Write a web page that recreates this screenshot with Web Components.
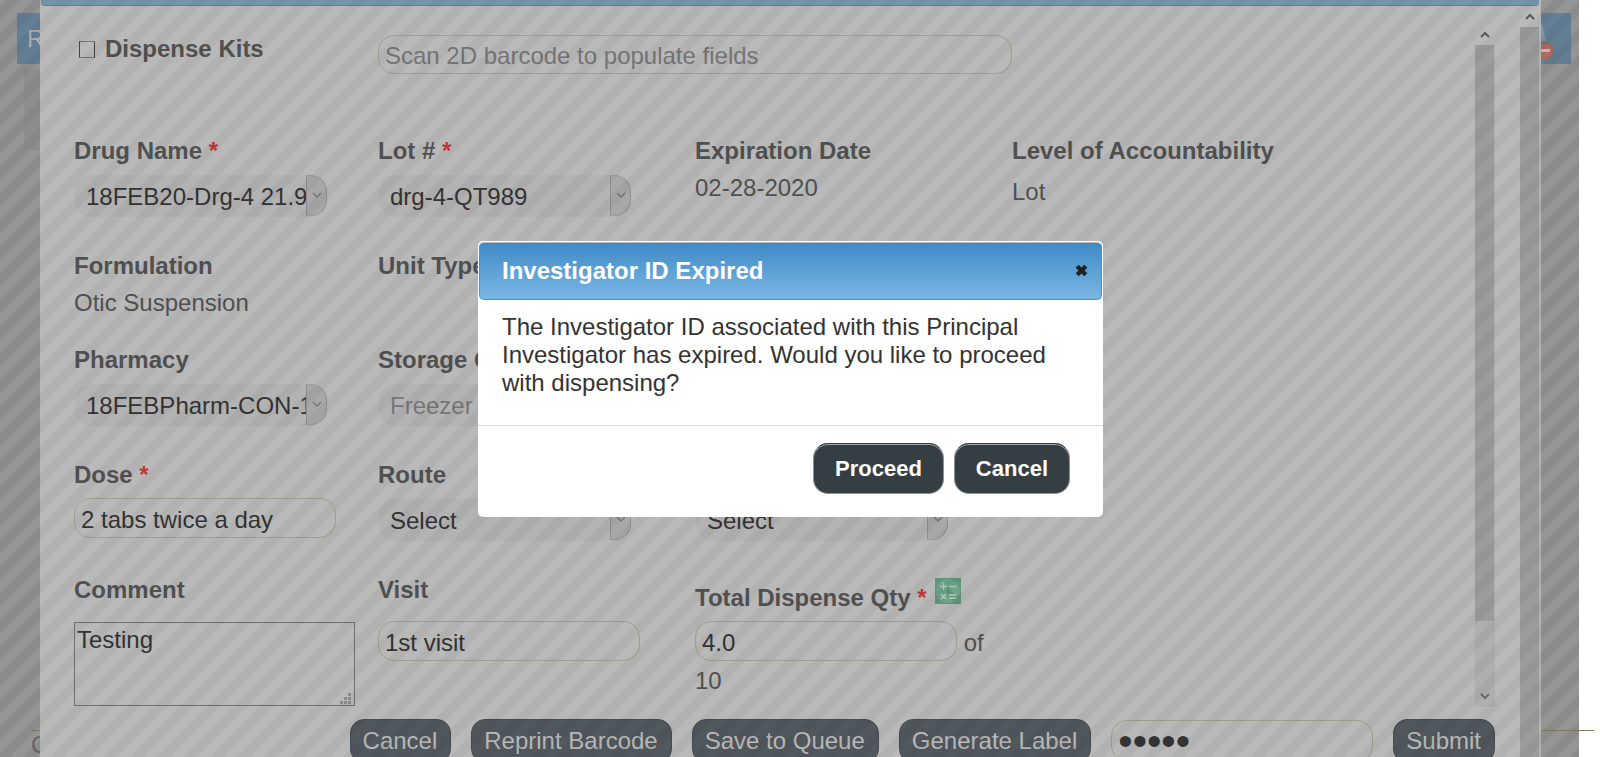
<!DOCTYPE html>
<html lang="en">
<head>
<meta charset="utf-8">
<meta name="viewport" content="width=device-width, initial-scale=1">
<title>Dispense</title>
<style>
  html, body { height: 100%; margin: 0; }
  body { background: #fff; overflow: hidden; font: 24px/28px "Liberation Sans", Arial, sans-serif; color: #515151; }
</style>
</head>
<body>
<app-shell>
  <host-page slot="page"></host-page>
  <dispense-window slot="window">
    <scan-bar slot="body"></scan-bar>
    <field-grid slot="body">
      <form-field label="Drug Name" required kind="select" value="18FEB20-Drg-4 21.9"></form-field>
      <form-field label="Lot #" required kind="select" value="drg-4-QT989"></form-field>
      <form-field label="Expiration Date" kind="text" value="02-28-2020"></form-field>
      <form-field label="Level of Accountability" kind="text" value="Lot" class="loose"></form-field>

      <form-field label="Formulation" kind="text" value="Otic Suspension"></form-field>
      <form-field label="Unit Type" kind="text" value="" class="wide"></form-field>

      <form-field label="Pharmacy" kind="select" value="18FEBPharm-CON-1"></form-field>
      <form-field label="Storage C" kind="select" value="Freezer" disabled class="wide"></form-field>

      <form-field label="Dose" required kind="input" value="2 tabs twice a day"></form-field>
      <form-field label="Route" kind="select" value="Select"></form-field>
      <form-field label="" hint="Frequency" kind="select" value="Select" class="rest"></form-field>

      <form-field label="Comment" kind="textarea" value="Testing"></form-field>
      <form-field label="Visit" kind="input" value="1st visit" class="low"></form-field>
      <form-field label="Total Dispense Qty" required kind="input" value="4.0" class="total"><calc-icon slot="icon"></calc-icon><span slot="after">of 10</span></form-field>
    </field-grid>
    <action-bar slot="footer">
      <pill-button>Cancel</pill-button>
      <pill-button>Reprint Barcode</pill-button>
      <pill-button>Save to Queue</pill-button>
      <pill-button>Generate Label</pill-button>
      <pin-input></pin-input>
      <pill-button>Submit</pill-button>
    </action-bar>
  </dispense-window>
  <confirm-dialog slot="dialog" heading="Investigator ID Expired">
    The Investigator ID associated with this Principal Investigator has expired. Would you like to proceed with dispensing?
    <dialog-button slot="actions">Proceed</dialog-button>
    <dialog-button slot="actions">Cancel</dialog-button>
  </confirm-dialog>
</app-shell>

<script>
const define = (name, render) => customElements.define(name, class extends HTMLElement {
  constructor() { super(); this.attachShadow({ mode: "open" }); }
  connectedCallback() {
    this.shadowRoot.innerHTML = "<style>*{box-sizing:border-box}</style>" + render(this);
  }
});

/* Diagonal stripes, three to every 80px tile */
const stripes = alpha => `repeating-linear-gradient(135deg,
  rgba(0,0,0,${alpha}) 0, rgba(0,0,0,${alpha}) calc(100% / 12 - 2px),
  transparent calc(100% / 12), transparent calc(100% / 6 - 2px), rgba(0,0,0,${alpha}) calc(100% / 6))`;

define("app-shell", () => `
<style>
  :host { display: block; position: relative; height: 100%; overflow: hidden; }
  .window { position: absolute; inset: 0 59px 0 40px; }
  .veil { position: absolute; inset: 0 21px 0 0; pointer-events: none;
    background: ${stripes(.045)} 8px 0 / 80px 80px; }
  .center { position: absolute; inset: 0 19px 0 0; display: grid; place-items: center; }
</style>
<slot name="page"></slot>
<div class="window"><slot name="window"></slot></div>
<div class="veil"></div>
<div class="center"><slot name="dialog"></slot></div>`);

define("host-page", () => `
<style>
  :host { display: flex; flex-direction: column; height: 100%; position: relative; }
  .veil { position: absolute; inset: 0 21px 0 0; z-index: -1;
    background: ${stripes(.025)} 8px 0 / 80px 80px, #959595; }
  header { display: flex; align-items: center; justify-content: space-between; height: 51px; margin: 13px 29px 0 17px; padding: 0 0 0 10px;
    background: #637f95; color: #b0b0b0; font-size: 24px; }
  svg { display: block; }
  main { width: 60px; height: 81px; margin: 5px 0 0 24px; background: #8d8d8d; }
  footer { margin: auto 6px 0 31px; height: 27px; border-top: 1px solid #7f7b5c; color: #666; }
</style>
<div class="veil"></div>
<header><span>R</span>
<svg width="40" height="51" viewBox="0 0 40 51" aria-hidden="true"><path d="M2 10h9l4 18H2z" fill="#7d96a5"/><circle cx="14" cy="38" r="9" fill="#9c6761"/><circle cx="14" cy="38" r="7" fill="#ad6b62"/><path d="M8 36h11v3H8z" fill="#c2b6b2"/></svg></header>
<main></main>
<footer>C</footer>`);

define("scroll-rail", el => `
<style>
  :host { display: flex; flex-direction: column; background: #afafaf; }
  .btn { flex: none; height: 21px; display: grid; place-items: center; background: #bababa; }
  .btn.down { background: none; }
  .thumb { background: #9c9c9c; margin-right: 1px; flex: ${el.getAttribute("thumb")}; }
  .free { flex: ${el.getAttribute("free")}; }
</style>
<div class="btn"><svg width="10" height="8" viewBox="0 0 10 8"><path d="M1 6l4-4 4 4" fill="none" stroke="#585858" stroke-width="2"/></svg></div>
<div class="thumb"></div><div class="free"></div>
${el.hasAttribute("down") ? `<div class="btn down"><svg width="10" height="8" viewBox="0 0 10 8"><path d="M1 1l4 4 4-4" fill="none" stroke="#6a6a6a" stroke-width="2"/></svg></div>` : ""}`);

define("dispense-window", () => `
<style>
  :host { display: flex; flex-direction: column; height: 100%; background: #b9b9b9; }
  .bar { flex: none; height: 6px; margin: 0 2px 0 1px; background: #7496ad; border-bottom: 1px solid #5d7f99; border-radius: 0 0 4px 4px; }
  .row { flex: 1; min-height: 0; display: flex; }
  .main { flex: 1; min-width: 0; padding: 18px 25px 0 34px; display: flex; flex-direction: column; }
  .body { flex: none; height: 683px; display: flex; }
  .content { flex: 1; min-width: 0; }
  scroll-rail { flex: none; width: 20px; }
  .outer { margin-right: 1px; }
</style>
<div class="bar"></div>
<div class="row">
  <div class="main">
    <div class="body"><div class="content"><slot name="body"></slot></div><scroll-rail thumb="576" free="65" down></scroll-rail></div>
    <slot name="footer"></slot>
  </div>
  <scroll-rail class="outer" thumb="1" free="0"></scroll-rail>
</div>`);

const columns = "304fr 317fr 317fr 463fr";
const fieldCss = "font: inherit; color: #333; background: none; border: 1px solid #a0a08a; border-radius: 16px; height: 40px; padding: 3px 6px 0; margin: 0; outline: 0;";

define("scan-bar", () => `
<style>
  :host { display: grid; grid-template-columns: ${columns}; height: 113px; align-items: start; }
  label { display: flex; align-items: center; gap: 10px; margin: 11px 0 0 5px; font-weight: bold; }
  input[type=checkbox] { appearance: none; width: 16px; height: 17px; margin: 0; border: 1px solid #444; border-top-color: #777; border-bottom-color: #777; }
  input[type=text] { ${fieldCss} height: 39px; padding-top: 2px; grid-column: 2 / 4; margin-top: 11px; }
  input::placeholder { color: #757575; opacity: 1; }
</style>
<label><input type="checkbox">Dispense Kits</label>
<input type="text" placeholder="Scan 2D barcode to populate fields" aria-label="Barcode">`);

define("field-grid", () => `
<style>
  :host { display: grid; grid-template-columns: ${columns}; grid-template-rows: 115px 94px 115px 115px auto; align-items: start; }
  ::slotted(.wide) { grid-column: span 3; }
  ::slotted(.rest) { grid-column: span 2; }
</style><slot></slot>`);

define("form-field", el => {
  const kind = el.getAttribute("kind"), value = el.getAttribute("value");
  const hint = el.getAttribute("hint");
  const aria = hint ? ` aria-label="${hint}"` : "";
  const control = {
    text: `<div class="value">${value}</div>`,
    input: `<input id="c" type="text" value="${value}">`,
    textarea: `<div class="area"><textarea id="c">${value}</textarea><svg width="12" height="12" viewBox="0 0 12 12" aria-hidden="true"><path d="M0 9h3v3H0zM4 9h3v3H4zM8 9h3v3H8zM4 5h3v3H4zM8 5h3v3H8zM8 1h3v3H8z" fill="#8c8c8c"/></svg></div>`,
    select: `<div class="select"><select id="c"${aria}${el.hasAttribute("disabled") ? " disabled" : ""}><option>${value}</option></select><span class="arrow"><svg width="10" height="8" viewBox="0 0 10 8"><path d="M1 1l4 4 4-4" fill="none" stroke="#777" stroke-width="1.5"/></svg></span></div>`
  }[kind];
  return `
<style>
  :host { display: block; }
  .head { display: flex; min-height: 28px; margin-bottom: 9px; }
  label { font-weight: bold; white-space: nowrap; }
  i { color: #c23636; font-style: normal; }
  input { ${fieldCss} width: 262px; }
  .value { min-height: 28px; }
  :host(.loose) .value { padding-top: 4px; }
  .select { display: flex; width: 252px; height: 42px; margin: 10px 0 0 1px; border-radius: 16px; background: #b3b3b3; overflow: hidden; }
  select { appearance: none; flex: 1; min-width: 0; border: 0; margin: 0; padding: 1px 0 0 11px; background: none; font: inherit; color: #333; outline: 0; }
  select:disabled { color: #777; opacity: 1; }
  .arrow { width: 21px; height: 41px; display: grid; place-items: center; background: #a8a8a8; border: 1px solid #8f8f8f; border-top-color: #9c9c9c; border-bottom-color: #9c9c9c; border-radius: 0 16px 16px 0; }
  .area { display: grid; width: 281px; height: 84px; margin-top: 18px; }
  textarea { grid-area: 1 / 1; resize: none; margin: 0; border: 1px solid #707070; padding: 3px 2px; background: none; font: inherit; color: #333; outline: 0; }
  .area svg { grid-area: 1 / 1; place-self: end; margin: 0 3px 2px 0; }
  :host(.low) .head { margin-bottom: 17px; }
  :host(.total) .head { padding-top: 8px; }
  :host(.total) { padding-right: 20px; }
  ::slotted([slot=icon]) { margin: -6px 0 0 8px; }
  ::slotted([slot=after]) { line-height: 38px; }
  .head:has(+ .select), .head:has(+ .area) { margin-bottom: 0; }
</style>
<div class="head"><label for="c">${el.getAttribute("label")}${el.hasAttribute("required") ? " <i>*</i>" : ""}</label><slot name="icon"></slot></div>${control} <slot name="after"></slot>`;
});

define("calc-icon", () => `
<style>:host { display: block; width: 26px; height: 26px; } svg { display: block; }</style>
<svg width="26" height="26" viewBox="0 0 26 26" aria-hidden="true">
<rect width="26" height="26" fill="#63957c"/><circle cx="13" cy="13" r="12" fill="#6ba58a"/><path d="M12 9l10 10-3 4-8-8z" fill="#5f9379"/>
<path d="M5 8.500h7M8.500 5v7M14 8.500h7M6 16l5 5M11 16l-5 5M14 17h7M14 20h7" stroke="#bfc9c4" stroke-width="1.500" fill="none"/></svg>`);

define("action-bar", () => `
<style>:host { display: flex; justify-content: flex-end; align-items: center; gap: 20px; margin-top: 12px; }</style><slot></slot>`);

define("pill-button", () => `
<style>
  :host { display: block; }
  button { display: block; height: 44px; padding: 0 13px 0 12px; border: 1px solid #444c52; border-radius: 14px; background: #51585d; color: #b9b9b9; font: inherit; white-space: nowrap; }
</style><button type="button"><slot></slot></button>`);

define("pin-input", () => `
<style>
  :host { display: block; }
  input { ${fieldCss} display: block; width: 262px; height: 42px; padding: 0 6px; font-size: 41px; }
</style><input type="password" value="12345" aria-label="PIN">`);

define("confirm-dialog", el => `
<style>
  :host { display: block; width: 625px; max-width: 90%; background: #fff; border-radius: 5px; color: #333; padding-top: 1px; }
  header { display: flex; align-items: center; justify-content: space-between; height: 58px; margin: 0 1px; padding: 0 13px 0 22px;
    border: 1px solid #4d90c8; border-top-color: #b9b9b9; border-radius: 5px; background: linear-gradient(#3f8ac6, #7ab7e4); color: #fff; }
  h2 { margin: 0; font: inherit; font-weight: bold; }
  header button { display: block; border: 0; padding: 0; margin: 0; background: none; }
  svg { display: block; }
  .text { padding: 13px 40px 28px 24px; }
  footer { display: flex; justify-content: flex-end; gap: 10px; padding: 17px 33px 23px; border-top: 1px solid #ddd; }
</style>
<header><h2>${el.getAttribute("heading")}</h2><button type="button" aria-label="Close"><svg width="13" height="13" viewBox="0 0 12 12"><path d="M2 2l8 8M10 2l-8 8" stroke="#222" stroke-width="4"/></svg></button></header>
<div class="text"><slot></slot></div>
<footer><slot name="actions"></slot></footer>`);

define("dialog-button", () => `
<style>
  :host { display: block; }
  button { display: block; height: 51px; padding: 1px 21px 0; border: 1px solid #8d9295; border-top-color: #343e43; border-radius: 15px; background: #343e43; box-shadow: inset 0 1px 0 #a5aaac;
    color: #fff; font: inherit; font-size: 22px; font-weight: bold; }
</style><button type="button"><slot></slot></button>`);
</script>
</body>
</html>
